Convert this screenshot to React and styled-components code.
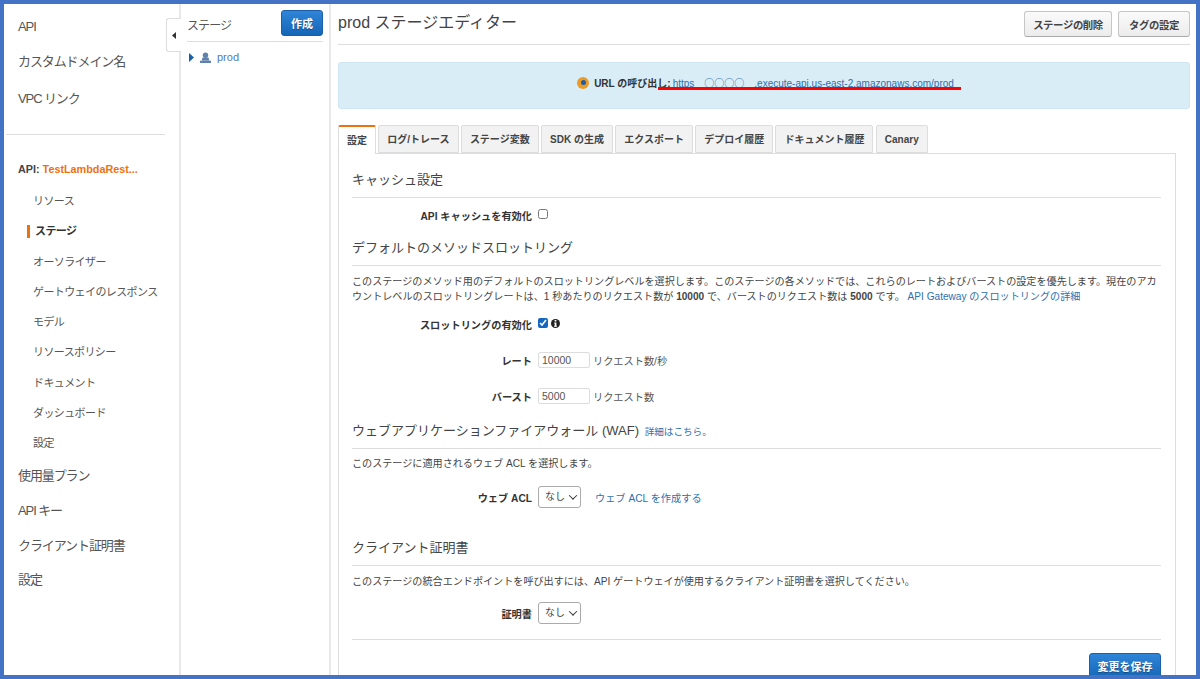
import React from "react";
import styled, { createGlobalStyle } from "styled-components";

const GlobalStyle = createGlobalStyle`
  html, body {
    margin: 0;
    padding: 0;
    background: #fff;
    font-family: "Liberation Sans", "Noto Sans CJK JP", sans-serif;
  }
  * { box-sizing: border-box; }
`;

const navSub = ["リソース", "ステージ", "オーソライザー", "ゲートウェイのレスポンス", "モデル", "リソースポリシー", "ドキュメント", "ダッシュボード", "設定"];
const navBottom = ["使用量プラン", "API キー", "クライアント証明書", "設定"];
const tabs = ["設定", "ログ/トレース", "ステージ変数", "SDK の生成", "エクスポート", "デプロイ履歴", "ドキュメント履歴", "Canary"];

const App = () => {
  return (
    <Frame>
      <GlobalStyle />
      <Sidebar>
        <NavTop>
          <NavItem>API</NavItem>
          <NavItem>カスタムドメイン名</NavItem>
          <NavItem $top={3}>VPC リンク</NavItem>
        </NavTop>
        <NavLine />
        <ApiName>API: <span>TestLambdaRest...</span></ApiName>
        <SubNav>
          {navSub.map((t) => <SubItem key={t} $active={t === "ステージ"}>{t}</SubItem>)}
        </SubNav>
        <div>
          {navBottom.map((t) => <NavItem key={t}>{t}</NavItem>)}
        </div>
      </Sidebar>
      <StagePane>
        <CollapseTab>
          <svg width="4" height="7" viewBox="0 0 4 7"><path d="M4 0v7L0 3.5z" fill="#333" /></svg>
        </CollapseTab>
        <StageHead>
          <StageTitle>ステージ</StageTitle>
          <PrimaryButton>作成</PrimaryButton>
        </StageHead>
        <TreeRow>
          <svg width="5" height="9" viewBox="0 0 5 9"><path d="M0 0l5 4.5L0 9z" fill="#1a5fa8" /></svg>
          <svg width="11" height="11" viewBox="0 0 11 11">
            <circle cx="5.5" cy="3.2" r="2.7" fill="#5f82ad" />
            <path d="M2.5 5.5h6l.8 3H1.7zM0 8.8h11V11H0z" fill="#5f82ad" />
          </svg>
          <TreeLink>prod</TreeLink>
        </TreeRow>
      </StagePane>
      <Main>
        <Header>
          <PageTitle>prod ステージエディター</PageTitle>
          <HeaderButtons>
            <GreyButton $w={88}>ステージの削除</GreyButton>
            <GreyButton $w={72}>タグの設定</GreyButton>
          </HeaderButtons>
        </Header>
        <Banner>
          <BannerDot />
          <strong>URL の呼び出し:</strong>
          <BannerLink>https<Circles>○○○○</Circles>.execute-api.us-east-2.amazonaws.com/prod</BannerLink>
          <RedLine />
        </Banner>
        <TabBar>
          {tabs.map((t, i) => <Tab key={t} $active={i === 0}>{t}</Tab>)}
        </TabBar>
        <Panel>
          <SectionTitle>キャッシュ設定</SectionTitle>
          <FormRow $h={34}>
            <FieldLabel>API キャッシュを有効化</FieldLabel>
            <Check type="checkbox" readOnly />
          </FormRow>
          <SectionTitle $top={5}>デフォルトのメソッドスロットリング</SectionTitle>
          <Body $top={8}>
            このステージのメソッド用のデフォルトのスロットリングレベルを選択します。このステージの各メソッドでは、これらのレートおよびバーストの設定を優先します。現在のアカウントレベルのスロットリングレートは、1 秒あたりのリクエスト数が <b>10000</b> で、バーストのリクエスト数は <b>5000</b> です。 <BlueLink>API Gateway のスロットリングの詳細</BlueLink>
          </Body>
          <FormRow $h={35} $top={3}>
            <FieldLabel>スロットリングの有効化</FieldLabel>
            <Check type="checkbox" checked readOnly />
            <InfoIcon>
              <svg width="9" height="11" viewBox="0 0 9 11">
                <circle cx="4.5" cy="5.5" r="4.5" fill="#222" />
                <path d="M3.6 2h1.8v1.5H3.6zM3.2 4.4h2.2v3.4h.6v1H3v-1h.7V5.4h-.5z" fill="#fff" />
              </svg>
            </InfoIcon>
          </FormRow>
          <FormRow $h={36}>
            <FieldLabel>レート</FieldLabel>
            <NumberBox>10000</NumberBox>
            <Unit>リクエスト数/秒</Unit>
          </FormRow>
          <FormRow $h={36}>
            <FieldLabel>バースト</FieldLabel>
            <NumberBox>5000</NumberBox>
            <Unit>リクエスト数</Unit>
          </FormRow>
          <SectionTitle $top={6}>ウェブアプリケーションファイアウォール (WAF) <SmallLink>詳細はこちら。</SmallLink></SectionTitle>
          <Body $top={7}>このステージに適用されるウェブ ACL を選択します。</Body>
          <FormRow $h={36} $top={8}>
            <FieldLabel>ウェブ ACL</FieldLabel>
            <SelectBox>なし<Caret /></SelectBox>
            <AclLink>ウェブ ACL を作成する</AclLink>
          </FormRow>
          <SectionTitle $top={22}>クライアント証明書</SectionTitle>
          <Body $top={8}>このステージの統合エンドポイントを呼び出すには、API ゲートウェイが使用するクライアント証明書を選択してください。</Body>
          <FormRow $h={36} $top={6}>
            <FieldLabel>証明書</FieldLabel>
            <SelectBox>なし<Caret /></SelectBox>
          </FormRow>
          <FootLine />
          <Footer>
            <PrimaryButton $wide>変更を保存</PrimaryButton>
          </Footer>
        </Panel>
      </Main>
    </Frame>
  );
};

export default App;

const Frame = styled.div`
  width: 1200px;
  height: 679px;
  border: 4px solid #4472c4;
  overflow: hidden;
  display: flex;
  background: #fff;
  color: #444;
  font-size: 12px;
`;

const Sidebar = styled.nav`
  width: 177px;
  flex: none;
  border-right: 2px solid #e8e8e8;
  height: 100%;
`;

const NavTop = styled.div`
  padding-top: 5px;
`;

const NavItem = styled.div`
  height: 34.7px;
  margin-top: ${(p) => p.$top || 0}px;
  padding-left: 14px;
  font-size: 13px;
  letter-spacing: -1.1px;
  line-height: 35px;
  color: #555;
  white-space: nowrap;
`;

const NavLine = styled.div`
  height: 1px;
  margin: 18px 14px 0 2px;
  background: #ddd;
`;

const ApiName = styled.div`
  margin-top: 26px;
  padding-left: 14px;
  font-size: 10.8px;
  font-weight: bold;
  color: #444;
  line-height: 16px;
  span { color: #ec7211; }
`;

const SubNav = styled.div`
  margin-top: 9px;
`;

const SubItem = styled.div`
  height: 30.25px;
  line-height: 30px;
  padding-left: ${(p) => (p.$active ? "23px" : "29px")};
  font-size: 11px;
  letter-spacing: -0.6px;
  color: ${(p) => (p.$active ? "#333" : "#555")};
  font-weight: ${(p) => (p.$active ? "bold" : "normal")};
  white-space: nowrap;
  display: flex;
  align-items: center;
  ${(p) => p.$active && `
    &::before {
      content: "";
      width: 3px;
      height: 13px;
      background: #ec7211;
      margin-right: 5px;
    }
  `}
`;

const StagePane = styled.section`
  position: relative;
  width: 150px;
  flex: none;
  border-right: 2px solid #e8e8e8;
  height: 100%;
  padding: 6px 6px 0 6px;
`;

const CollapseTab = styled.div`
  position: absolute;
  left: -15px;
  top: 14px;
  width: 15px;
  height: 34px;
  background: #fff;
  border: 1px solid #ddd;
  border-right: none;
  border-radius: 3px 0 0 3px;
  display: flex;
  align-items: center;
  justify-content: center;
`;

const StageHead = styled.div`
  display: flex;
  justify-content: space-between;
  align-items: flex-start;
  height: 32px;
  border-bottom: 1px solid #ddd;
`;

const StageTitle = styled.div`
  font-size: 12px;
  letter-spacing: -0.9px;
  color: #555;
  line-height: 26px;
  padding-top: 3px;
`;

const PrimaryButton = styled.button`
  width: ${(p) => (p.$wide ? "72px" : "42px")};
  height: 26px;
  border: 1px solid #1a5fa8;
  border-radius: 3px;
  background: linear-gradient(#2f85d8, #1566b7);
  color: #fff;
  font-family: inherit;
  font-size: 11px;
  font-weight: bold;
  padding: 0;
  text-shadow: 0 1px 1px rgba(0, 0, 0, 0.35);
`;

const TreeRow = styled.div`
  display: flex;
  align-items: center;
  gap: 5px;
  padding: 7px 0 0 2px;
  height: 23px;
  svg:nth-child(2) { margin-right: 1px; margin-left: 1px; }
`;

const TreeLink = styled.span`
  color: #4f7cb5;
  font-size: 11px;
`;

const Main = styled.main`
  flex: 1;
  min-width: 0;
  padding: 0 6px 0 7px;
`;

const Header = styled.header`
  height: 41px;
  padding-top: 7px;
  border-bottom: 1px solid #ddd;
  display: flex;
  justify-content: space-between;
  align-items: flex-start;
`;

const PageTitle = styled.h1`
  margin: 0;
  font-size: 16px;
  font-weight: normal;
  color: #444;
  line-height: 24px;
`;

const HeaderButtons = styled.div`
  display: flex;
  gap: 6px;
`;

const GreyButton = styled.button`
  width: ${(p) => p.$w}px;
  height: 26px;
  padding: 0;
  border: 1px solid #c6c6c6;
  border-bottom-color: #aaa;
  border-radius: 3px;
  background: linear-gradient(#fafafa, #ececec);
  color: #444;
  font-family: inherit;
  font-size: 10.4px;
  letter-spacing: -0.4px;
  font-weight: bold;
  white-space: nowrap;
`;

const Banner = styled.div`
  position: relative;
  margin-top: 17px;
  height: 47px;
  background: #d9edf7;
  border: 1px solid #cfe6f2;
  border-radius: 3px;
  display: flex;
  align-items: center;
  justify-content: center;
  font-size: 10px;
  color: #333;
  padding: 0 0 6px 3px;
`;

const BannerDot = styled.span`
  width: 12px;
  height: 12px;
  border-radius: 50%;
  background: #ec9c26;
  margin-right: 5px;
  display: flex;
  align-items: center;
  justify-content: center;
  &::after {
    content: "";
    width: 5px;
    height: 5px;
    border-radius: 50%;
    background: #1d5da8;
  }
`;

const BannerLink = styled.span`
  color: #2f6fb0;
  margin-left: 2px;
`;

const Circles = styled.span`
  margin: 0 10px;
  font-family: "Noto Sans CJK JP", sans-serif;
`;

const RedLine = styled.span`
  position: absolute;
  left: 319px;
  top: 24px;
  width: 303px;
  height: 3px;
  background: #f00;
`;

const TabBar = styled.div`
  margin-top: 16px;
  display: flex;
  gap: 2.3px;
  height: 28px;
  align-items: flex-end;
`;

const Tab = styled.div`
  height: ${(p) => (p.$active ? "29px" : "28px")};
  padding: 0 8px;
  line-height: 27px;
  font-size: 10px;
  font-weight: bold;
  color: #444;
  white-space: nowrap;
  background: ${(p) => (p.$active ? "#fff" : "#f2f2f2")};
  border: 1px solid #ddd;
  border-top: ${(p) => (p.$active ? "2px solid #ec7211" : "1px solid #ddd")};
  border-bottom: ${(p) => (p.$active ? "none" : "1px solid #ddd")};
  border-radius: 2px 2px 0 0;
  margin-bottom: ${(p) => (p.$active ? "-1px" : "0")};
  position: relative;
  z-index: 1;
`;

const Panel = styled.section`
  width: 838px;
  height: 540px;
  border: 1px solid #ddd;
  padding: 15px 14px 0 13px;
`;

const SectionTitle = styled.h2`
  margin: ${(p) => p.$top || 0}px 0 0;
  height: 29px;
  border-bottom: 1px solid #ddd;
  font-size: 13px;
  line-height: 22px;
  font-weight: normal;
  color: #444;
`;

const FormRow = styled.div`
  display: flex;
  align-items: center;
  height: ${(p) => p.$h}px;
  margin-top: ${(p) => p.$top || 0}px;
`;

const FieldLabel = styled.label`
  width: 180px;
  flex: none;
  margin-right: 6px;
  text-align: right;
  font-size: 10.2px;
  font-weight: bold;
  color: #333;
  white-space: nowrap;
`;

const Check = styled.input`
  width: 10px;
  height: 10px;
  margin: -3px 0 0 0;
  accent-color: #1566c0;
`;

const InfoIcon = styled.span`
  margin: -3px 0 0 3px;
  display: flex;
`;

const Body = styled.p`
  margin: ${(p) => p.$top || 0}px 0 0;
  font-size: 10.1px;
  line-height: 15px;
  color: #444;
`;

const BlueLink = styled.a`
  color: #2f6fb0;
`;

const SmallLink = styled.a`
  margin-left: 2px;
  font-size: 9.6px;
  color: #2f6fb0;
`;

const NumberBox = styled.div`
  width: 52px;
  height: 16px;
  border: 1px solid #ddd;
  border-radius: 2px;
  padding-left: 3px;
  font-size: 10.5px;
  line-height: 14px;
  color: #555;
`;

const Unit = styled.span`
  margin-left: 3px;
  font-size: 10.2px;
  color: #555;
`;

const SelectBox = styled.div`
  width: 43px;
  height: 22px;
  border: 1px solid #aaa;
  border-radius: 3px;
  padding-left: 6px;
  font-size: 10px;
  line-height: 20px;
  color: #444;
  display: flex;
  align-items: center;
  justify-content: space-between;
  padding-right: 4px;
`;

const Caret = styled.span`
  width: 6px;
  height: 6px;
  border-right: 1.5px solid #333;
  border-bottom: 1.5px solid #333;
  transform: rotate(45deg) translate(-1px, -1px);
`;

const AclLink = styled.a`
  margin-left: 14px;
  font-size: 10.2px;
  color: #2f6fb0;
`;

const FootLine = styled.div`
  margin-top: 8px;
  height: 1px;
  background: #ddd;
`;

const Footer = styled.div`
  display: flex;
  justify-content: flex-end;
  padding-top: 13px;
`;
